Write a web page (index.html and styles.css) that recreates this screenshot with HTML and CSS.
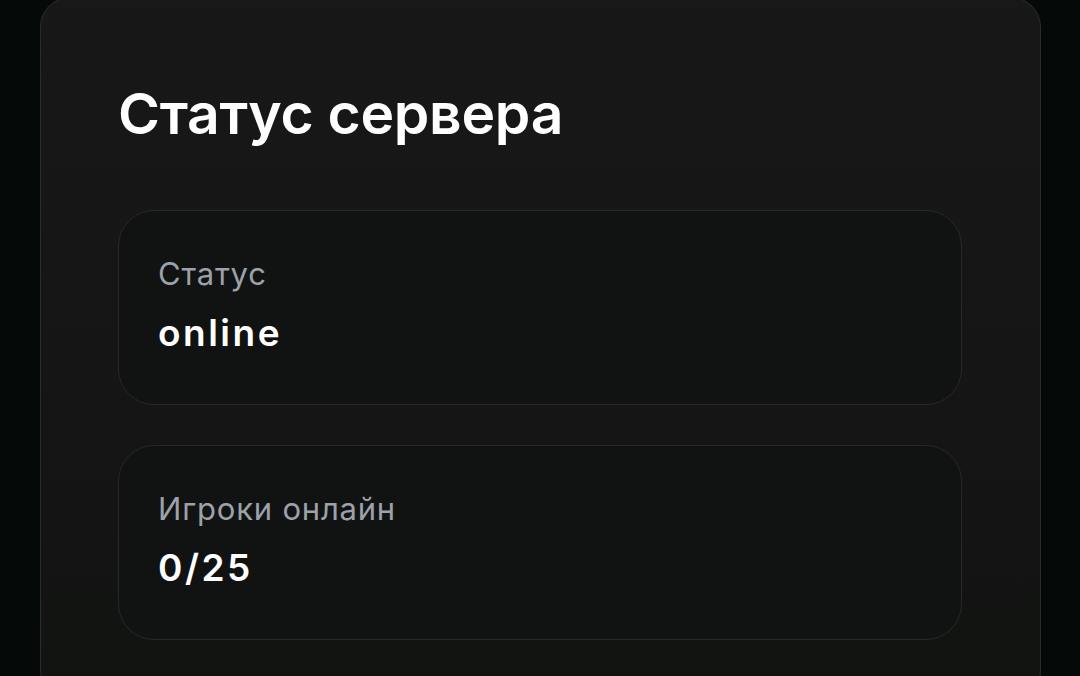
FILE: index.html
```html
<!DOCTYPE html>
<html lang="ru">
<head>
<meta charset="utf-8">
<title>Статус сервера</title>
<link rel="stylesheet" href="styles.css">
</head>
<body>
<main class="page">
  <section class="panel">
    <h1 class="panel-title">Статус сервера</h1>
    <div class="stat-list">
      <div class="stat">
        <div class="stat-label">Статус</div>
        <div class="stat-value">online</div>
      </div>
      <div class="stat">
        <div class="stat-label">Игроки онлайн</div>
        <div class="stat-value">0/25</div>
      </div>
    </div>
  </section>
</main>
</body>
</html>
```
FILE: styles.css
```css
html, body {
  margin: 0;
  padding: 0;
  background: #050a08;
  height: 100%;
  overflow: hidden;
}
body {
  font-family: Inter, "Noto Sans", sans-serif;
  color: #ffffff;
}
.page {
  padding: 0 39px 0 40px;
}
.panel {
  margin-top: -3px;
  border: 1px solid #2a2b2a;
  border-radius: 30px;
  background: linear-gradient(180deg, #181818 0%, #161616 40%, #111311 100%);
  padding: 76px 78px 60px 77px;
  min-height: 700px;
  box-sizing: border-box;
}
.panel-title {
  margin: 0 0 56px 0;
  font-size: 57px;
  font-weight: 600;
  line-height: 80px;
  letter-spacing: -0.3px;
  color: #ffffff;
}
.stat-list {
  display: flex;
  flex-direction: column;
  gap: 40px;
}
.stat {
  height: 195px;
  box-sizing: border-box;
  border: 1px solid #272827;
  border-radius: 36px;
  background: #111312;
  padding: 43px 40px 0 39px;
}
.stat-label {
  font-size: 31px;
  line-height: 40px;
  color: #9ca1aa;
  font-weight: 400;
  letter-spacing: 0.8px;
}
.stat-value {
  margin-top: 16px;
  font-size: 37px;
  line-height: 46px;
  font-weight: 600;
  letter-spacing: 2.5px;
  color: #ffffff;
}
```
